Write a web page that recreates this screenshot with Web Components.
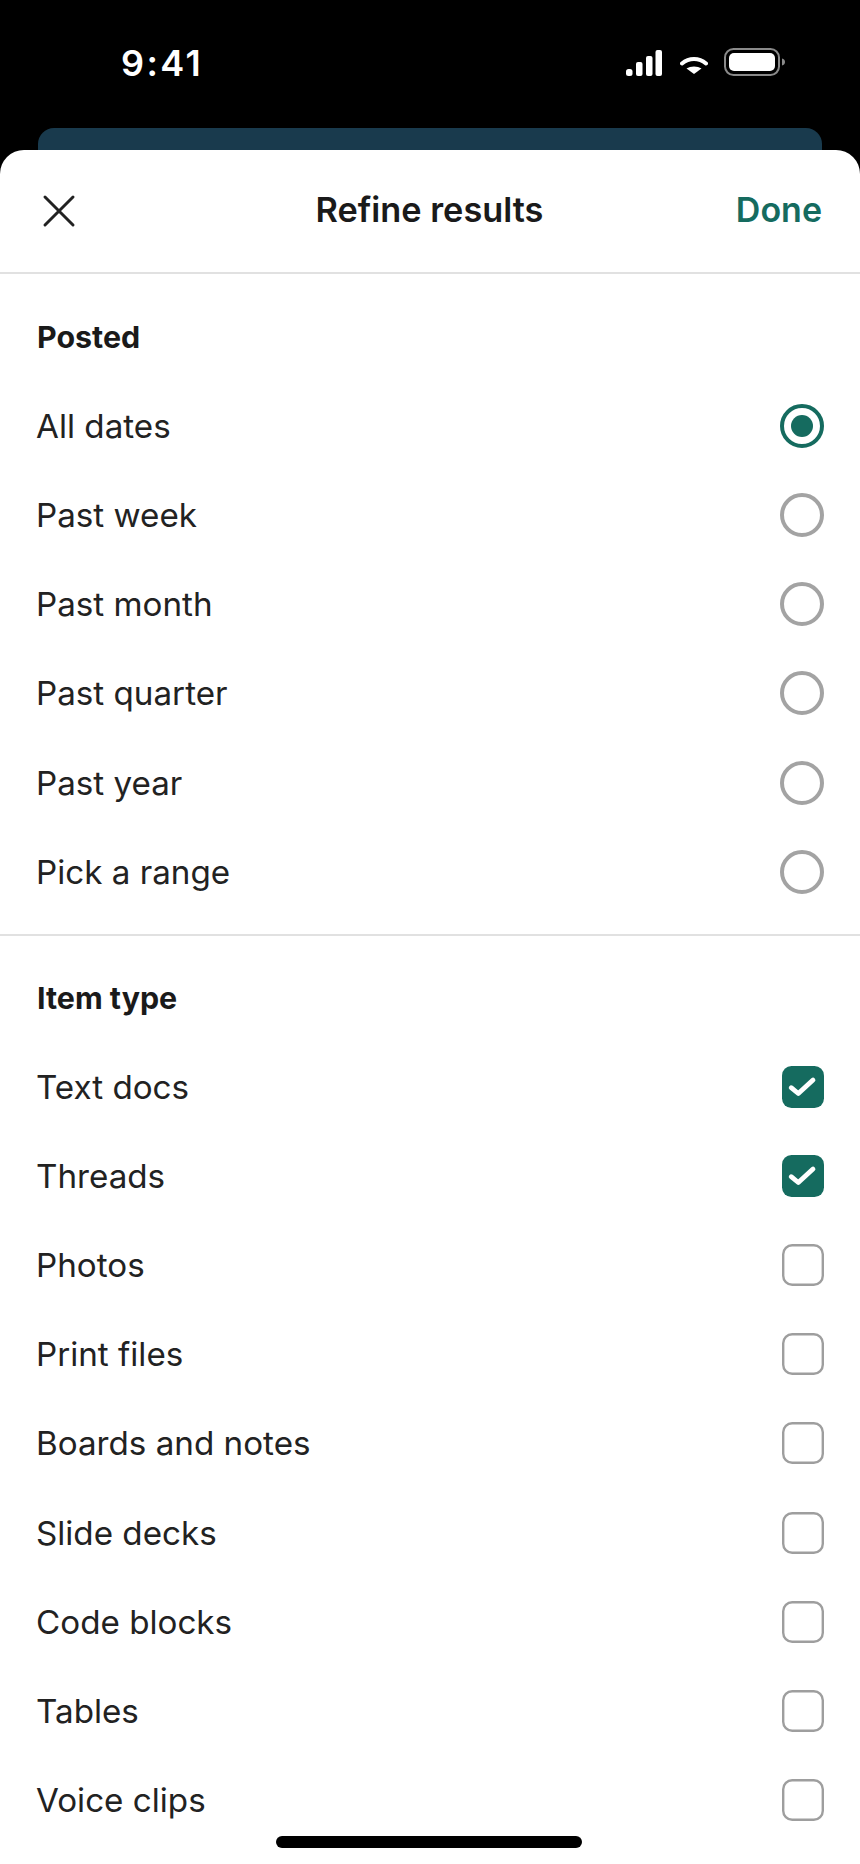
<!DOCTYPE html>
<html lang="en">
<head>
<meta charset="utf-8">
<title>Refine results</title>
<style>
    html, body { margin: 0; padding: 0; background: #000; }
    body { width: 860px; height: 1864px; overflow: hidden; font-family: Inter, "Liberation Sans", sans-serif; }
</style>
</head>
<body>
<status-bar time="9:41"></status-bar>
<refine-sheet heading="Refine results" action="Done">
    <filter-section heading="Posted">
        <filter-option kind="radio" checked>All dates</filter-option>
        <filter-option kind="radio">Past week</filter-option>
        <filter-option kind="radio">Past month</filter-option>
        <filter-option kind="radio">Past quarter</filter-option>
        <filter-option kind="radio">Past year</filter-option>
        <filter-option kind="radio">Pick a range</filter-option>
    </filter-section>
    <filter-section heading="Item type" class="second">
        <filter-option kind="check" checked>Text docs</filter-option>
        <filter-option kind="check" checked>Threads</filter-option>
        <filter-option kind="check">Photos</filter-option>
        <filter-option kind="check">Print files</filter-option>
        <filter-option kind="check">Boards and notes</filter-option>
        <filter-option kind="check">Slide decks</filter-option>
        <filter-option kind="check">Code blocks</filter-option>
        <filter-option kind="check">Tables</filter-option>
        <filter-option kind="check">Voice clips</filter-option>
    </filter-section>
</refine-sheet>

<script>
class StatusBar extends HTMLElement {
    constructor() {
        super();
        this.attachShadow({ mode: 'open' });
    }

    connectedCallback() {
        const time = this.getAttribute('time') || '';
        this.shadowRoot.innerHTML = `
            <style>
                :host { display: block; height: 128px; background: #000; color: #fff; }
                .row { display: flex; justify-content: space-between; align-items: flex-start; padding: 0 75px 0 121px; }
                .time { font-size: 36px; font-weight: 600; line-height: 42px; margin-top: 42px; letter-spacing: 2.4px; }
                .icons { display: flex; align-items: flex-start; margin-top: 48px; }
                svg { display: block; }
                .signal { margin-top: 2px; }
                .wifi { margin: 9px 16px 0 18px; }
            </style>
            <div class="row">
                <span class="time">${time}</span>
                <div class="icons">
                    <svg class="signal" width="36" height="26" viewBox="0 0 36 26" fill="#fff">
                        <rect x="0" y="19" width="6.5" height="7" rx="2.5"/>
                        <rect x="10" y="12" width="6.5" height="14" rx="2"/>
                        <rect x="20" y="6" width="6.5" height="20" rx="2"/>
                        <rect x="29.5" y="0" width="6.5" height="26" rx="2"/>
                    </svg>
                    <svg class="wifi" width="28" height="17" viewBox="0 0 28 17" fill="none">
                        <path d="M2 6.5 C9 0.5 19 0.5 26 6.5" stroke="#fff" stroke-width="4" stroke-linecap="round"/>
                        <path d="M6.5 11.5 C10.5 8.8 17.5 8.8 21.5 11.5 L14 17 Z" fill="#fff"/>
                    </svg>
                    <svg width="61" height="28" viewBox="0 0 61 28" fill="none">
                        <rect x="1" y="1" width="54" height="26" rx="8.5" stroke="#8a8a8a" stroke-width="2"/>
                        <rect x="5" y="5" width="46" height="18" rx="5" fill="#fff"/>
                        <path d="M58 10.5 C60 11 61 12.4 61 14 C61 15.6 60 17 58 17.5 Z" fill="#8a8a8a"/>
                    </svg>
                </div>
            </div>`;
    }
}

class RefineSheet extends HTMLElement {
    constructor() {
        super();
        this.attachShadow({ mode: 'open' });
    }

    connectedCallback() {
        const heading = this.getAttribute('heading') || '';
        const action = this.getAttribute('action') || '';
        this.shadowRoot.innerHTML = `
            <style>
                :host { display: block; position: relative; height: 1736px; background: #000; color: #1a1a1a; }
                .peek { height: 40px; margin: 0 38px; background: #193a4d; border-radius: 16px 16px 0 0; }
                .sheet { position: relative; margin-top: -18px; height: 1714px; overflow: hidden; background: #fff; border-radius: 24px 24px 0 0; }
                header { display: grid; grid-template-columns: 1fr auto 1fr; align-items: center; height: 122px; padding: 0 38px 0 37px; border-bottom: 2px solid #e1e1e1; }
                h1 { margin: 0 0 3px; font-size: 34.3px; font-weight: 600; line-height: 54px; color: #1a1a1a; }
                .close { display: block; width: 36px; height: 36px; margin-left: 4px; }
                .done { justify-self: end; margin-bottom: 3px; font-size: 34px; font-weight: 600; color: #156b5f; line-height: 54px; }
                .home { position: absolute; left: 276px; bottom: 16px; width: 306px; height: 12px; border-radius: 6px; background: #000; }
            </style>
            <div class="peek"></div>
            <div class="sheet">
                <header>
                    <svg class="close" viewBox="0 0 36 36" fill="none" stroke="#222" stroke-width="3" stroke-linecap="round">
                        <path d="M4 4 L32 32 M32 4 L4 32"/>
                    </svg>
                    <h1>${heading}</h1>
                    <span class="done">${action}</span>
                </header>
                <slot></slot>
                <div class="home"></div>
            </div>`;
    }
}

class FilterSection extends HTMLElement {
    constructor() {
        super();
        this.attachShadow({ mode: 'open' });
    }

    connectedCallback() {
        const heading = this.getAttribute('heading') || '';
        this.shadowRoot.innerHTML = `
            <style>
                :host { display: block; padding: 0 36px; }
                :host(.second) { border-top: 2px solid #e1e1e1; }
                h2 { margin: 0; height: 107px; box-sizing: border-box; padding: 45px 0 0 1px; font-size: 30.4px; font-weight: 700; line-height: 36px; color: #1a1a1a; }
                :host(.second) h2 { height: 106px; padding-top: 43.5px; }
                .rows { display: grid; grid-auto-rows: 89.25px; padding-bottom: 17.5px; }
                :host(.second) .rows { grid-auto-rows: 89.2px; }
            </style>
            <h2>${heading}</h2>
            <div class="rows"><slot></slot></div>`;
    }
}

class FilterOption extends HTMLElement {
    constructor() {
        super();
        this.attachShadow({ mode: 'open' });
    }

    connectedCallback() {
        const kind = this.getAttribute('kind');
        const checked = this.hasAttribute('checked');
        let mark;
        if (kind === 'radio') {
            mark = checked
                ? `<svg width="44" height="44" viewBox="0 0 44 44"><circle cx="22" cy="22" r="20" fill="none" stroke="#156b5f" stroke-width="4"/><circle cx="22" cy="22" r="11" fill="#156b5f"/></svg>`
                : `<svg width="44" height="44" viewBox="0 0 44 44"><circle cx="22" cy="22" r="20" fill="none" stroke="#a3a3a3" stroke-width="4"/></svg>`;
        } else {
            mark = checked
                ? `<svg width="42" height="42" viewBox="0 0 42 42"><rect width="42" height="42" rx="9.5" fill="#156b5f"/><path d="M9.2 21.7 L16.3 27.5 L31 14" fill="none" stroke="#fff" stroke-width="4.8" stroke-linecap="round" stroke-linejoin="round"/></svg>`
                : `<svg width="42" height="42" viewBox="0 0 42 42"><rect x="1.2" y="1.2" width="39.6" height="39.6" rx="9" fill="none" stroke="#9e9e9e" stroke-width="2.4"/></svg>`;
        }
        this.shadowRoot.innerHTML = `
            <style>
                :host { display: flex; align-items: center; justify-content: space-between; font-size: 33.2px; font-weight: 400; color: #222; }
                .mark { display: flex; justify-content: flex-end; width: 44px; }
                svg { display: block; }
            </style>
            <span><slot></slot></span>
            <span class="mark">${mark}</span>`;
    }
}

customElements.define('status-bar', StatusBar);
customElements.define('refine-sheet', RefineSheet);
customElements.define('filter-section', FilterSection);
customElements.define('filter-option', FilterOption);
</script>
</body>
</html>
